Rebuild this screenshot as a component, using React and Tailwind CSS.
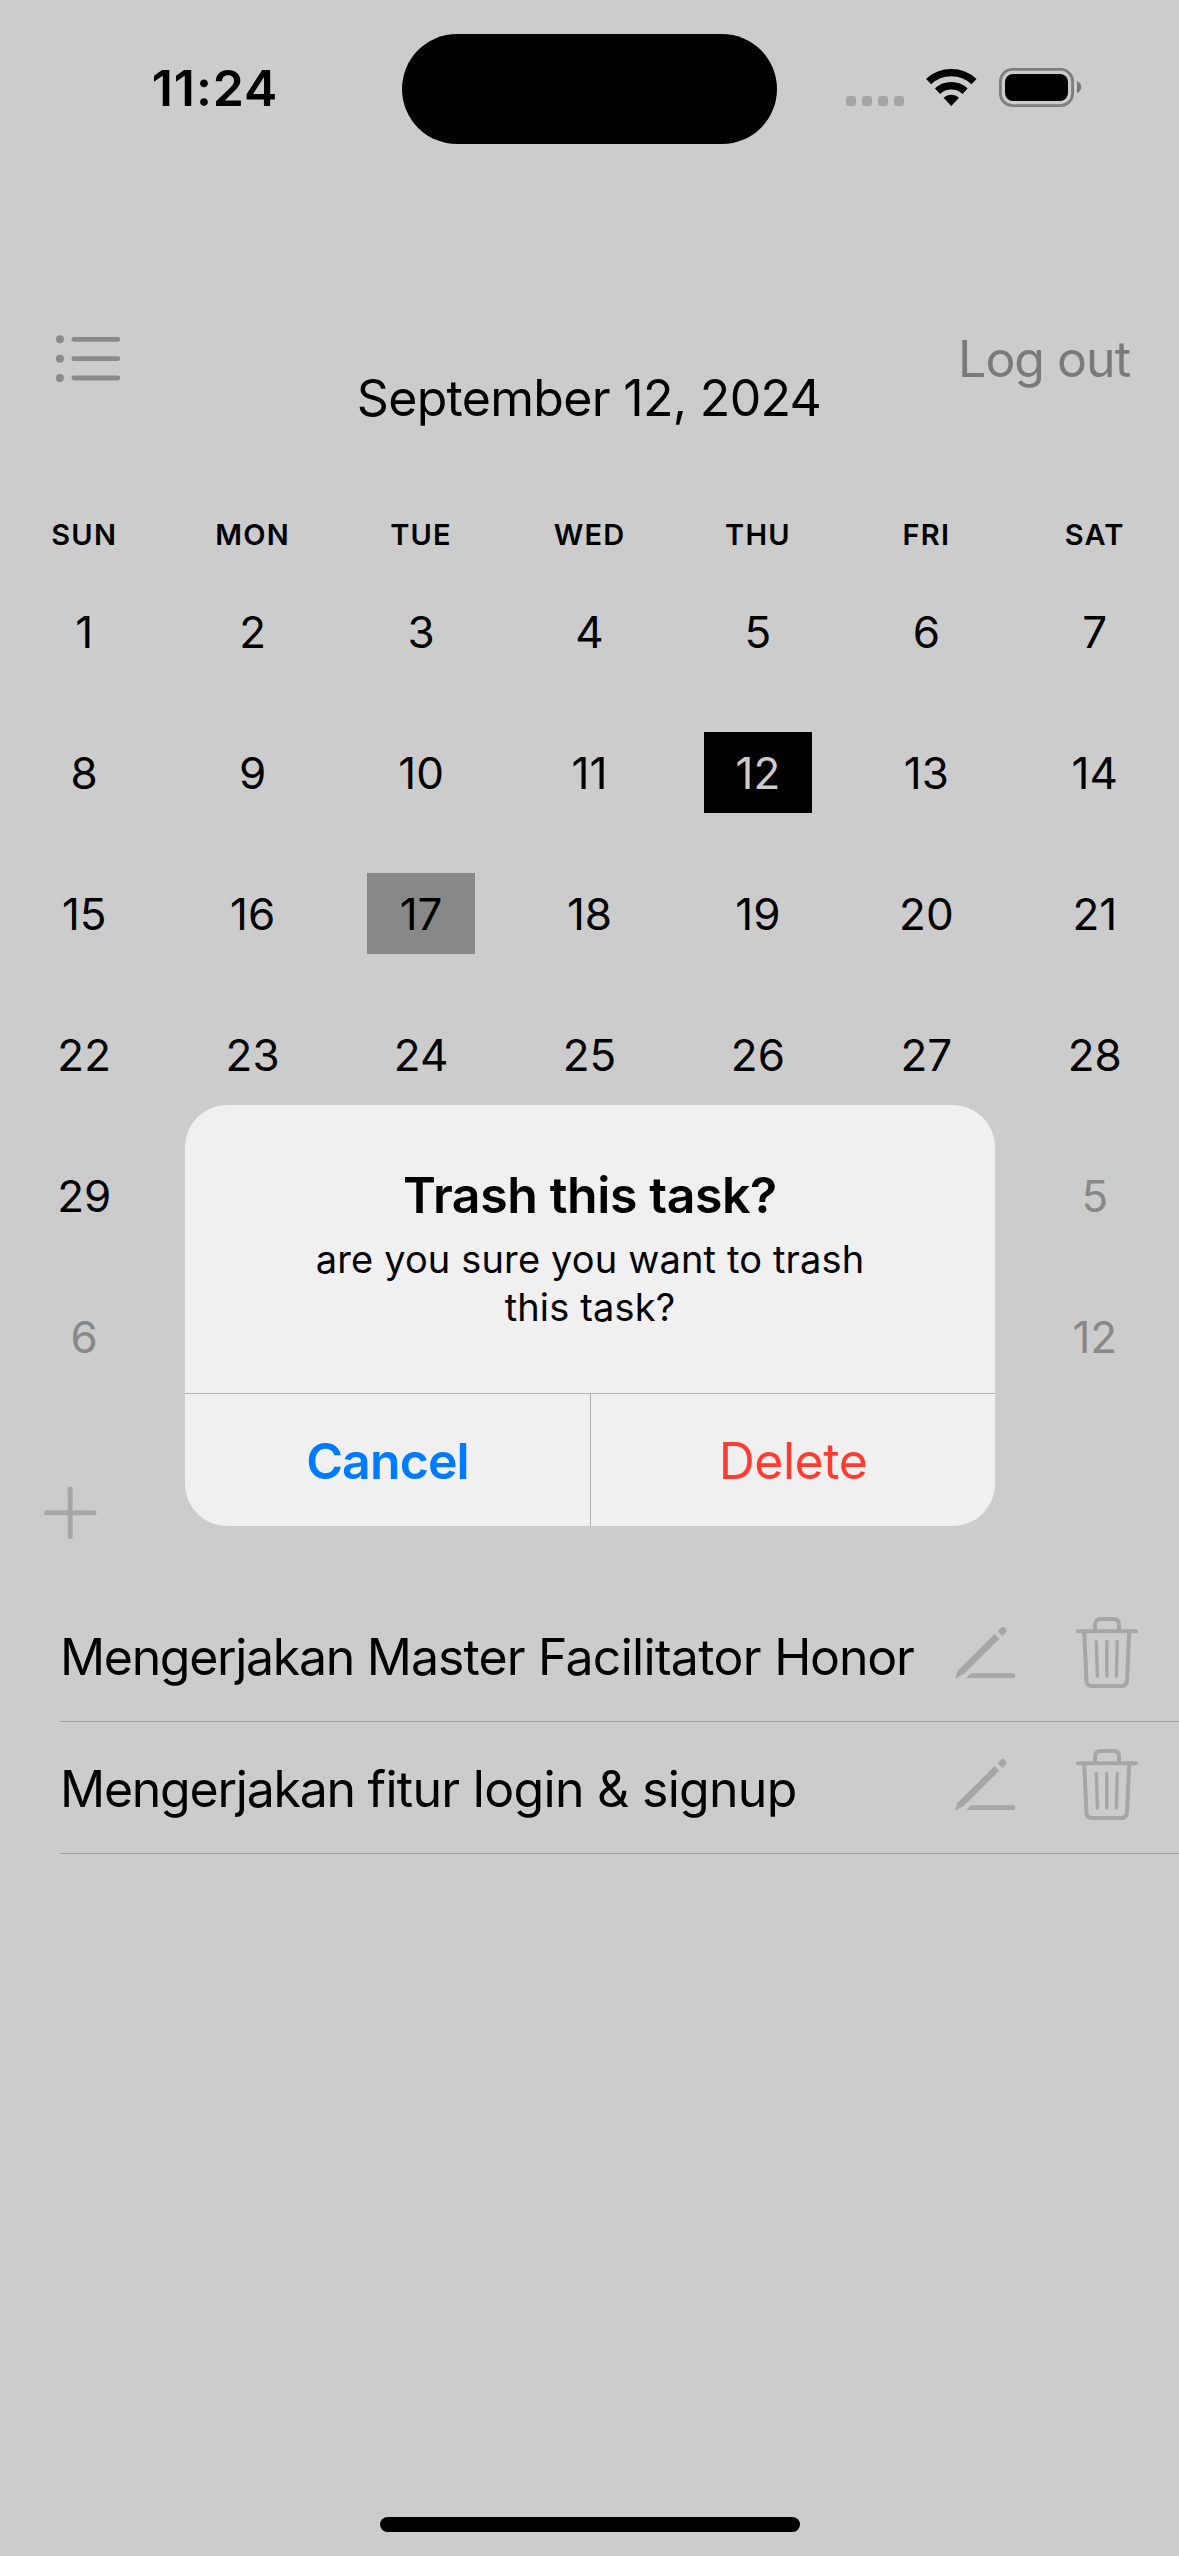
const WEEKDAYS = ["SUN", "MON", "TUE", "WED", "THU", "FRI", "SAT"];

const DAYS = [
  ...Array.from({ length: 29 }, (_, i) => ({ day: i + 1 })),
  null, null, null, null, null,
  { day: 5, muted: true },
  { day: 6, muted: true },
  null, null, null, null, null,
  { day: 12, muted: true },
];

// Each title is split so that every part can carry its own tracking.
const TASKS = [
  {
    id: 1,
    parts: [
      { text: "Mengerjakan ", spacing: "tracking-[-1.33px]" },
      { text: "Master ", spacing: "tracking-[-0.9px]" },
      { text: "Facilitator ", spacing: "tracking-[-0.7px]" },
      { text: "Honor", spacing: "tracking-[-1.2px]" },
    ],
  },
  {
    id: 2,
    parts: [
      { text: "Mengerjakan ", spacing: "tracking-[-1.25px]" },
      { text: "fitur login & signup", spacing: "tracking-[-0.7px]" },
    ],
  },
];

function SignalDots() {
  return (
    <svg className="h-[39px] w-[58px]" viewBox="0 0 58 39" fill="#a5a5a5">
      {[0, 16, 32, 48].map((x) => (
        <rect key={x} x={x} y="28" width="10" height="10" rx="3.2" />
      ))}
    </svg>
  );
}

function WifiIcon() {
  return (
    <svg className="h-[39px] w-[53px]" viewBox="0 0 53 39" fill="none" stroke="#000">
      <path d="M3.6 13.6A33.3 33.3 0 0 1 49 13.6" strokeWidth="7.4" />
      <path d="M12.5 23.2A20.3 20.3 0 0 1 40.1 23.2" strokeWidth="7.6" />
      <path d="M26.3 38L18.5 29.8A11.8 11.8 0 0 1 34.1 29.8Z" fill="#000" stroke="none" />
    </svg>
  );
}

function BatteryIcon() {
  return (
    <svg className="h-[39px] w-[83px]" viewBox="0 0 83 39">
      <rect x="1.4" y="1.4" width="72.2" height="36.2" rx="12" fill="none" stroke="#7e7e7e" strokeWidth="2.8" />
      <rect x="6" y="6" width="63" height="27" rx="8" />
      <path d="M78 13Q82.3 15 82.3 19T78 25.3Z" fill="#777" />
    </svg>
  );
}

function ListIcon() {
  return (
    <svg className="h-[48px] w-[65px]" viewBox="0 0 65 48" fill="#8a8a8a">
      {[4.3, 23.7, 43].map((y) => (
        <g key={y}>
          <circle cx="3.9" cy={y} r="4" />
          <rect x="15.5" y={y - 2.4} width="48.7" height="4.8" rx="2.4" />
        </g>
      ))}
    </svg>
  );
}

function PlusIcon() {
  return (
    <svg className="h-[53px] w-[53px]" viewBox="0 0 53 53" fill="none" stroke="#a6a6a6" strokeWidth="5" strokeLinecap="round">
      <path d="M26.2 3V50.5M2.5 26.7H50" />
    </svg>
  );
}

function PencilIcon() {
  return (
    <svg className="h-[73px] w-[62px]" viewBox="0 0 62 73" fill="#a6a6a6">
      <path d="M40.7 18L45.3 22.7L11.2 56.7Q10.3 57.7 9.3 58.3L2.2 62Q1 62.3 1.4 61L3.7 54.7Z" />
      <path d="M43.6 15.2L46.4 12.2Q48.7 9.8 51.2 12.2Q53.7 14.6 51.3 17.1L48.3 20Z" />
      <path d="M12.3 62L16.4 57.8Q17 57.3 17.8 57.3H59A2.35 2.35 0 0 1 59 62Z" />
    </svg>
  );
}

function TrashIcon() {
  return (
    <svg className="h-[73px] w-[64px]" viewBox="0 0 64 73" fill="none" stroke="#a6a6a6" strokeWidth="4" strokeLinecap="round">
      <path d="M3 15.2H61" />
      <path d="M20.2 14V8.5Q20.2 3 25.7 3H38.6Q44.1 3 44.1 8.5V14" />
      <path d="M9.3 16L11.4 64.5Q11.7 70 16.9 70H46.5Q51.6 70 52 64.5L54.2 16" />
      <path d="M21.3 25.5L22.4 60M31.8 25.5V60M42.3 25.5L41.4 60" strokeWidth="3.4" />
    </svg>
  );
}

function StatusBar() {
  return (
    <header className="flex h-[177px] shrink-0 items-center">
      <div className="flex w-[402px] justify-center pb-[2px] pl-[28px] text-[50px] leading-[60px] font-semibold tracking-[0.9px]">
        11:24
      </div>
      <div className="mt-px h-[110px] w-[375px] rounded-full bg-black" />
      <div className="flex w-[402px] items-center pb-[2px] pl-[69px]">
        <SignalDots />
        <div className="pl-[21px]">
          <WifiIcon />
        </div>
        <div className="pl-[21px]">
          <BatteryIcon />
        </div>
      </div>
    </header>
  );
}

function DayCell({ entry }) {
  if (!entry) return <div />;
  let tone = "text-black";
  if (entry.muted) tone = "text-[#888888]";
  if (entry.day === 12 && !entry.muted) tone = "bg-black text-[#cccccc]";
  if (entry.day === 17) tone = "bg-[#888888] text-black";
  return (
    <div className="flex items-center justify-center">
      <div className={`flex h-[81px] w-[108px] items-center justify-center ${tone}`}>{entry.day}</div>
    </div>
  );
}

function Alert() {
  return (
    <div role="alertdialog" className="absolute top-[1105px] left-[185px] flex h-[421px] w-[810px] flex-col overflow-hidden rounded-[42px] bg-[#f0f0f0]">
      <div className="flex h-[288px] flex-col items-center pt-[60px] text-center">
        <h2 className="text-[50px] leading-[60px] font-semibold tracking-[-0.4px]">Trash this task?</h2>
        <p className="mt-[10px] w-[600px] text-[38px] leading-[48px] tracking-[0.15px]">
          are you sure you want to trash this task?
        </p>
      </div>
      <div className="grid flex-1 grid-cols-2 border-t border-[#b0b0b0] text-[50px] leading-[60px]">
        <button className="pt-[2px] font-semibold tracking-[-0.87px] text-[#007aff]">Cancel</button>
        <button className="border-l border-[#b0b0b0] pt-[2px] tracking-[-0.47px] text-[#ff3b30]">Delete</button>
      </div>
    </div>
  );
}

export default function App() {
  return (
    <div className="relative flex h-[2556px] w-[1179px] flex-col overflow-hidden bg-[#cccccc] font-['Inter',sans-serif] text-black">
      <StatusBar />

      <nav className="mt-[152px] grid h-[99px] shrink-0 grid-cols-[1fr_auto_1fr] items-start pr-[49px] pl-[56px]">
        <div className="pt-[6px]">
          <ListIcon />
        </div>
        <h1 className="translate-x-[-4px] pt-[39px] text-[50px] leading-[60px] tracking-[-0.68px]">September 12, 2024</h1>
        <button className="justify-self-end text-[50px] leading-[60px] tracking-[-1px] text-[#7a7a7a]">Log out</button>
      </nav>

      <div className="mt-[80px] grid h-[53px] shrink-0 grid-cols-7 items-center text-center text-[29px] font-semibold tracking-[1.2px]">
        {WEEKDAYS.map((name) => (
          <span key={name}>{name}</span>
        ))}
      </div>

      <div className="grid shrink-0 auto-rows-[141px] grid-cols-7 text-[44px]">
        {DAYS.map((entry, i) => (
          <DayCell key={i} entry={entry} />
        ))}
      </div>

      <div className="mt-[79px] pl-[44px]">
        <PlusIcon />
      </div>

      <ul className="mt-[51px] pl-[60px]">
        {TASKS.map((task) => (
          <li key={task.id} className="flex h-[132px] items-start border-b border-[#a0a0a0] pr-[40px]">
            <span className="flex-1 pt-[37px] text-[50px] leading-[60px] whitespace-pre">
              {task.parts.map((part) => (
                <span key={part.text} className={part.spacing}>{part.text}</span>
              ))}
            </span>
            <div className="flex gap-[59px] pt-[26px]">
              <PencilIcon />
              <TrashIcon />
            </div>
          </li>
        ))}
      </ul>

      <div className="mt-auto mb-[24px] h-[15px] w-[420px] self-center rounded-full bg-black" />
      <Alert />
    </div>
  );
}
